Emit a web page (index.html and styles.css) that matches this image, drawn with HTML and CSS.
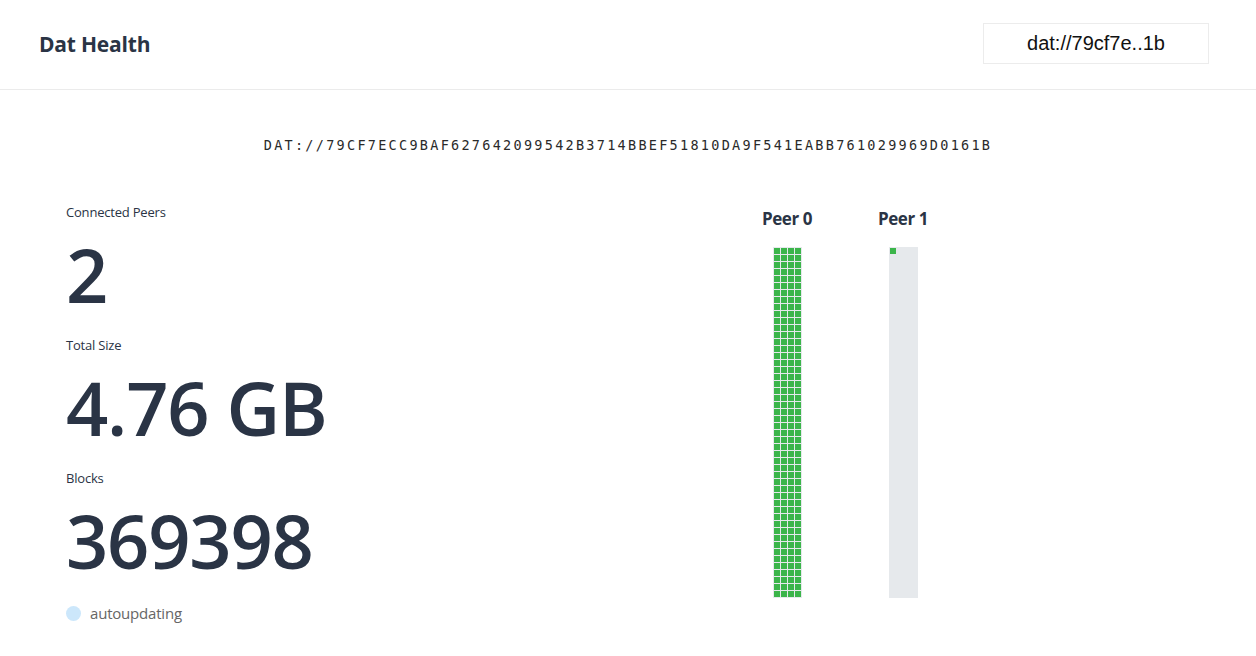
FILE: index.html
```html
<!DOCTYPE html>
<html>
<head>
<meta charset="utf-8">
<title>Dat Health</title>
<link rel="stylesheet" href="styles.css">
</head>
<body>
<header class="topbar">
  <h1 class="brand">Dat Health</h1>
  <div class="key-input">dat://79cf7e..1b</div>
</header>
<main class="content">
  <div class="hash">DAT://79CF7ECC9BAF627642099542B3714BBEF51810DA9F541EABB761029969D0161B</div>
  <div class="row">
    <section class="stats">
      <div class="stat">
        <div class="stat-label">Connected Peers</div>
        <div class="stat-value">2</div>
      </div>
      <div class="stat">
        <div class="stat-label">Total Size</div>
        <div class="stat-value">4.76 GB</div>
      </div>
      <div class="stat">
        <div class="stat-label">Blocks</div>
        <div class="stat-value">369398</div>
      </div>
      <div class="status"><span class="dot"></span><span class="status-text">autoupdating</span></div>
    </section>
    <section class="peers">
      <div class="peer">
        <div class="peer-name">Peer 0</div>
        <div class="blocks" id="p0"></div>
      </div>
      <div class="peer">
        <div class="peer-name">Peer 1</div>
        <div class="blocks" id="p1"><span class="cell"></span></div>
      </div>
    </section>
  </div>
</main>
<script>
  var p0 = document.getElementById('p0');
  var html = '';
  for (var i = 0; i < 200; i++) html += '<span class="cell"></span>';
  p0.innerHTML = html;
</script>
</body>
</html>
```
FILE: styles.css
```css
* { box-sizing: border-box; }
html, body { margin: 0; padding: 0; background: #fff; }
body {
  font-family: "Open Sans", "Noto Sans", sans-serif;
  color: #2a3445;
}
.topbar {
  height: 90px;
  border-bottom: 1px solid #ebebeb;
  display: flex;
  align-items: center;
  justify-content: space-between;
  padding: 0 47px 0 39px;
}
.brand {
  margin: 0;
  font-size: 21px;
  font-weight: 700;
  letter-spacing: -0.2px;
  color: #2a3445;
  position: relative;
  top: -1px;
}
.key-input {
  width: 226px;
  height: 41px;
  border: 1px solid #ececec;
  display: flex;
  align-items: center;
  justify-content: center;
  font-family: "Liberation Sans", Arial, sans-serif;
  font-size: 20px;
  color: #111;
  position: relative;
  top: -1px;
}
.content { padding: 0; }
.hash {
  text-align: center;
  font-family: "DejaVu Sans Mono", monospace;
  font-size: 13.5px;
  letter-spacing: 2.28px;
  color: #2a2a2a;
  margin-top: 45px;
  line-height: 20px;
}
.row {
  display: flex;
  margin-top: 49px;
}
.stats {
  padding-left: 66px;
  width: 742px;
}
.stat-label {
  font-size: 13px;
  line-height: 16px;
  color: #2a3445;
  letter-spacing: -0.2px;
}
.stat-value {
  font-size: 74px;
  font-weight: 600;
  line-height: 74px;
  letter-spacing: -1.2px;
  margin-top: 18px;
  margin-bottom: 25px;
  color: #2a3445;
}
.status {
  display: flex;
  align-items: center;
  margin-top: 0;
}
.dot {
  width: 15px;
  height: 15px;
  border-radius: 50%;
  background: #cce7fb;
  margin-right: 9px;
}
.status-text {
  font-size: 15px;
  color: #666;
  letter-spacing: -0.2px;
}
.peers {
  display: flex;
  gap: 26px;
  padding-top: 5px;
}
.peer {
  width: 90px;
  display: flex;
  flex-direction: column;
  align-items: center;
}
.peer-name {
  font-size: 17px;
  font-weight: 700;
  line-height: 20px;
  letter-spacing: -0.4px;
  color: #2a3445;
}
.blocks {
  margin-top: 18px;
  width: 29px;
  height: 351px;
  background: #e6e9ec;
  padding: 1px 0 0 1px;
  display: flex;
  flex-wrap: wrap;
  align-content: flex-start;
}
.cell {
  width: 6px;
  height: 6px;
  margin: 0 1px 1px 0;
  background: #3bb54a;
}
```
